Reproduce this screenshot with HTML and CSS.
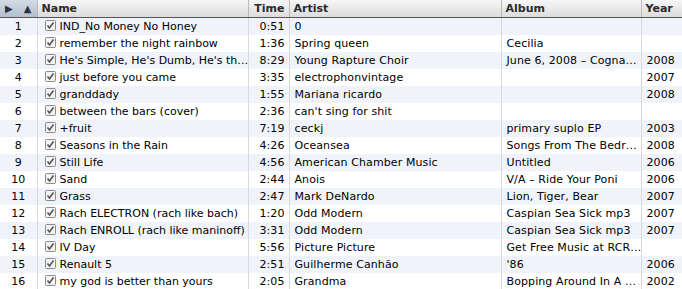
FILE: index.html
```html
<!DOCTYPE html>
<html lang="en">
  <head>
    <meta charset="UTF-8" />
    <title>Library</title>
    <link rel="stylesheet" href="styles.css">
  </head>
  <body>
    <table class="songs">
      <colgroup>
        <col class="c-num" /><col class="c-name" /><col class="c-time" />
        <col class="c-artist" /><col class="c-album" /><col class="c-year" />
      </colgroup>
      <thead>
        <tr>
          <th class="sort"><span class="play">&#9654;</span><span class="up">&#9650;</span></th>
          <th>Name</th>
          <th class="time">Time</th>
          <th>Artist</th>
          <th>Album</th>
          <th>Year</th>
        </tr>
      </thead>
      <tbody id="rows"></tbody>
    </table>

    <script>
      let songs = [
        ["IND_No Money No Honey", "0:51", "0", "", ""],
        ["remember the night rainbow", "1:36", "Spring queen", "Cecilia", ""],
        ["He's Simple, He's Dumb, He's th…", "8:29", "Young Rapture Choir", "June 6, 2008 – Cogna…", "2008"],
        ["just before you came", "3:35", "electrophonvintage", "", "2007"],
        ["granddady", "1:55", "Mariana ricardo", "", "2008"],
        ["between the bars (cover)", "2:36", "can't sing for shit", "", ""],
        ["+fruit", "7:19", "ceckj", "primary suplo EP", "2003"],
        ["Seasons in the Rain", "4:26", "Oceansea", "Songs From The Bedr…", "2008"],
        ["Still Life", "4:56", "American Chamber Music", "Untitled", "2006"],
        ["Sand", "2:44", "Anois", "V/A – Ride Your Poni", "2006"],
        ["Grass", "2:47", "Mark DeNardo", "Lion, Tiger, Bear", "2007"],
        ["Rach ELECTRON (rach like bach)", "1:20", "Odd Modern", "Caspian Sea Sick mp3", "2007"],
        ["Rach ENROLL (rach like maninoff)", "3:31", "Odd Modern", "Caspian Sea Sick mp3", "2007"],
        ["IV Day", "5:56", "Picture Picture", "Get Free Music at RCR…", ""],
        ["Renault 5", "2:51", "Guilherme Canhão", "'86", "2006"],
        ["my god is better than yours", "2:05", "Grandma", "Bopping Around In A …", "2002"]
      ];

      // checkbox drawn once, reused per row
      let box =
        '<svg class="check" width="11" height="11" viewBox="0 0 11 11">' +
        '<rect x="0.5" y="0.5" width="10" height="10" rx="1" fill="#f4f4f4" stroke="#8a8a8a"/>' +
        '<path d="M2.5 5.5 L4.5 8 L8.5 2.5" fill="none" stroke="#555" stroke-width="1.6"/>' +
        "</svg>";

      let body = document.getElementById("rows");
      songs.forEach(function (s, i) {
        let tr = document.createElement("tr");
        tr.innerHTML =
          '<td class="num">' + (i + 1) + "</td>" +
          '<td class="name">' + box + "<span>" + s[0] + "</span></td>" +
          '<td class="time">' + s[1] + "</td>" +
          "<td>" + s[2] + "</td>" +
          "<td>" + s[3] + "</td>" +
          "<td>" + s[4] + "</td>";
        body.appendChild(tr);
      });
    </script>
  </body>
</html>
```

FILE: styles.css
```css
body {
  margin: 0;
  background: #fff;
  font-family: "DejaVu Sans", sans-serif;
  font-size: 11px;
  color: #000;
  overflow: hidden;
}
.songs {
  width: 682px;
  table-layout: fixed;
  border-collapse: collapse;
}
.c-num { width: 37px; }
.c-name { width: 211px; }
.c-time { width: 41px; }
.c-artist { width: 212px; }
.c-album { width: 140px; }
.c-year { width: 41px; }

th {
  height: 17px;
  padding: 0 4px;
  text-align: left;
  font-weight: bold;
  color: #2b2b2b;
  background: linear-gradient(#f6f6f6, #dcdcdc);
  border-left: 1px solid #b9b9b9;
  border-bottom: 1px solid #555;
  white-space: nowrap;
  overflow: hidden;
}
th:first-child {
  border-left: none;
}
th.sort {
  padding: 0 5px;
  background: linear-gradient(#d3dbe6, #b3bfcf);
  color: #2c3340;
  font-size: 10px;
}
th.sort .up {
  float: right;
}
th.time {
  text-align: right;
}

td {
  height: 17px;
  padding: 0 3px 0 5px;
  letter-spacing: 0.1px;
  white-space: nowrap;
  overflow: hidden;
  border-left: 1px solid #d9d9d9;
}
td:first-child {
  border-left: none;
}
tbody tr:nth-child(odd) {
  background: #f0f4fa;
}
td.num {
  text-align: center;
  padding: 0;
}
td.name {
  padding-left: 7px;
  padding-right: 0;
  letter-spacing: 0;
}
td.name .check {
  vertical-align: -1px;
  margin-right: 4px;
}
td.time {
  text-align: right;
  padding-right: 4px;
}
```
